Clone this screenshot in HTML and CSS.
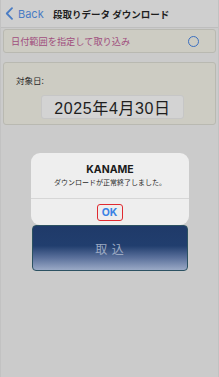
FILE: index.html
```html
<!DOCTYPE html>
<html lang="ja">
<head>
<meta charset="utf-8">
<link rel="stylesheet" href="styles.css">
</head>
<body>
<div class="screen">
  <header class="nav">
    <div class="back">
      <svg class="chev" width="9" height="13" viewBox="0 0 9 13"><path d="M7 1.2 L1.8 6.5 L7 11.8" fill="none" stroke="#4a7cc4" stroke-width="1.8" stroke-linecap="round" stroke-linejoin="round"/></svg>
      <span>Back</span>
    </div>
    <div class="title">段取りデータ ダウンロード</div>
  </header>
  <div class="row">
    <span class="row-label">日付範囲を指定して取り込み</span>
    <span class="radio"></span>
  </div>
  <div class="box">
    <div class="box-label">対象日:</div>
    <div class="date">2025年4月30日</div>
  </div>
  <div class="submit">取 込</div>

  <div class="alert">
    <div class="alert-body">
      <div class="alert-title">KANAME</div>
      <div class="alert-msg">ダウンロードが正常終了しました。</div>
    </div>
    <div class="alert-actions">
      <span class="ok">OK</span>
    </div>
  </div>
</div>
</body>
</html>
```
FILE: styles.css
```css
* { box-sizing: border-box; }
html, body { margin: 0; padding: 0; }
body {
  width: 219px;
  height: 377px;
  background: #cbcbcb;
  font-family: Inter, "Noto Sans CJK JP", sans-serif;
  overflow: hidden;
}
.screen {
  position: relative;
  width: 219px;
  height: 377px;
  border-left: 1px solid #c2c2c2;
  border-right: 1px solid #c2c2c2;
}
.nav {
  height: 28px;
  display: flex;
  align-items: center;
  border-bottom: 1px solid #bebebe;
  background: #cfcfcf;
  padding-left: 4px;
}
.back {
  display: flex;
  align-items: center;
  gap: 4px;
  color: #4a7cc4;
  font-size: 11px;
  width: 48px;
}
.title {
  font-size: 9.5px;
  font-weight: 700;
  color: #1e1e1e;
  font-family: "Noto Sans CJK JP", sans-serif;
}
.row {
  margin: 1px 2px 0 2px;
  height: 24px;
  border: 1px solid #b9b9b1;
  border-radius: 3px;
  background: #cdccc3;
  display: flex;
  align-items: center;
  justify-content: space-between;
  padding: 0 16px 0 7px;
}
.row-label {
  font-size: 9.2px;
  color: #a04e7e;
  font-family: "Noto Sans CJK JP", sans-serif;
}
.radio {
  width: 11px;
  height: 11px;
  border: 1.5px solid #3b6fc0;
  border-radius: 50%;
}
.box {
  margin: 9px 2px 0 2px;
  height: 63px;
  border: 1px solid #b9b9b1;
  border-radius: 3px;
  background: #cdccc3;
  padding: 11px 0 0 12px;
}
.box-label {
  font-size: 8.5px;
  color: #2a2a2a;
  font-family: "Noto Sans CJK JP", sans-serif;
  line-height: 12px;
}
.date {
  margin: 9px 0 0 25px;
  width: 143px;
  height: 24px;
  border: 1px solid #c6c6c6;
  border-radius: 3px;
  background: #d3d3d3;
  font-size: 16px;
  color: #1e1e1e;
  display: flex;
  align-items: center;
  justify-content: center;
  letter-spacing: 0.6px;
  font-family: "Liberation Sans", "Noto Sans CJK JP", sans-serif;
}
.submit {
  margin: 100px 0 0 31px;
  width: 156px;
  height: 46px;
  border: 1px solid #2c5262;
  border-radius: 4px;
  background: linear-gradient(to bottom, #1f3a69 0%, #213e6e 45%, #5a709b 72%, #9aa9c6 100%);
  color: #9ba9c2;
  font-size: 12px;
  display: flex;
  align-items: center;
  justify-content: center;
  font-family: "Noto Sans CJK JP", sans-serif;
  letter-spacing: 1px;
}
.alert {
  position: absolute;
  left: 30px;
  top: 153px;
  width: 158px;
  height: 72px;
  background: #eeeeee;
  border-radius: 9px;
  display: flex;
  flex-direction: column;
}
.alert-body {
  height: 46px;
  border-bottom: 1px solid #d6d6d6;
  text-align: center;
  padding-top: 10px;
}
.alert-title {
  font-size: 10.5px;
  font-weight: 700;
  color: #1a1a1a;
  line-height: 13px;
}
.alert-msg {
  font-size: 7px;
  color: #2a2a2a;
  line-height: 12px;
  font-family: "Noto Sans CJK JP", sans-serif;
}
.alert-actions {
  flex: 1;
  display: flex;
  align-items: center;
  justify-content: center;
}
.ok {
  width: 26px;
  height: 17px;
  border: 1.5px solid #e02a30;
  border-radius: 3px;
  color: #3a83e4;
  font-weight: 700;
  font-size: 10.5px;
  display: flex;
  align-items: center;
  justify-content: center;
  margin-left: -1px;
}
```
